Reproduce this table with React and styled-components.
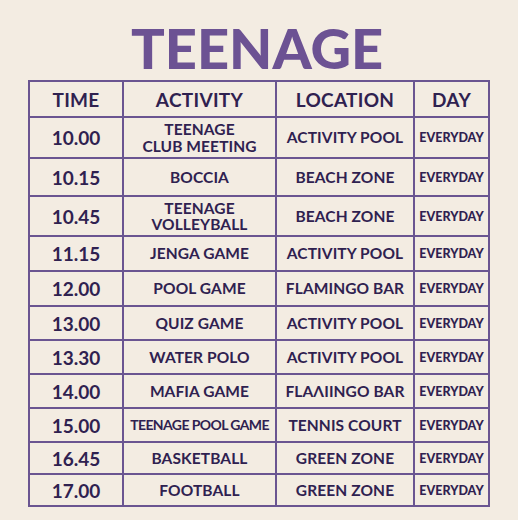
import React from 'react';
import styled, { createGlobalStyle } from 'styled-components';

const GlobalStyle = createGlobalStyle`
    html, body {
        margin: 0;
        padding: 0;
        background: #f3ece2;
    }
    body {
        font-family: 'Lato', 'Liberation Sans', sans-serif;
    }
`;

const schedule = [
    { time: '10.00', activity: ['TEENAGE', 'CLUB MEETING'], location: 'ACTIVITY POOL', h: 41 },
    { time: '10.15', activity: ['BOCCIA'], location: 'BEACH ZONE', h: 38 },
    { time: '10.45', activity: ['TEENAGE', 'VOLLEYBALL'], location: 'BEACH ZONE', h: 40 },
    { time: '11.15', activity: ['JENGA GAME'], location: 'ACTIVITY POOL', h: 35 },
    { time: '12.00', activity: ['POOL GAME'], location: 'FLAMINGO BAR', h: 35 },
    { time: '13.00', activity: ['QUIZ GAME'], location: 'ACTIVITY POOL', h: 34 },
    { time: '13.30', activity: ['WATER POLO'], location: 'ACTIVITY POOL', h: 34 },
    { time: '14.00', activity: ['MAFIA GAME'], location: 'FLAΛIINGO BAR', h: 34 },
    { time: '15.00', activity: ['TEENAGE POOL GAME'], location: 'TENNIS COURT', h: 34, tight: true },
    { time: '16.45', activity: ['BASKETBALL'], location: 'GREEN ZONE', h: 32 },
    { time: '17.00', activity: ['FOOTBALL'], location: 'GREEN ZONE', h: 32 },
];

const App = () => (
    <Page>
        <GlobalStyle />
        <Title>TEENAGE</Title>
        <Table>
            <Row $h={34}>
                <HeadCell>TIME</HeadCell>
                <HeadCell>ACTIVITY</HeadCell>
                <HeadCell>LOCATION</HeadCell>
                <HeadCell>DAY</HeadCell>
            </Row>
            {schedule.map((item) => (
                <Row key={item.time} $h={item.h}>
                    <TimeCell>{item.time}</TimeCell>
                    <TextCell $tight={item.tight}>
                        {item.activity.map((line) => (
                            <Line key={line}>{line}</Line>
                        ))}
                    </TextCell>
                    <TextCell>{item.location}</TextCell>
                    <DayCell>EVERYDAY</DayCell>
                </Row>
            ))}
        </Table>
    </Page>
);

export default App;

const Page = styled.div`
    width: 518px;
    height: 520px;
    padding: 17px 0 0 28px;
    box-sizing: border-box;
    display: flex;
    flex-direction: column;
    align-items: flex-start;
`;

const Title = styled.h1`
    margin: 0 0 0 103px;
    font-family: 'Lato', sans-serif;
    font-weight: 900;
    font-size: 56px;
    line-height: 62px;
    letter-spacing: 0;
    color: #6c5293;
`;

const Table = styled.div`
    margin-top: 1px;
    width: 462px;
    border: 2px solid #6a5591;
    box-sizing: border-box;
    display: flex;
    flex-direction: column;
`;

const Row = styled.div`
    display: grid;
    grid-template-columns: 92px 153px 138px 1fr;
    height: ${(p) => p.$h}px;
    box-sizing: border-box;
    & + & {
        border-top: 2px solid #6a5591;
    }
    & > * + * {
        border-left: 2px solid #6a5591;
    }
`;

const Cell = styled.div`
    display: flex;
    flex-direction: column;
    align-items: center;
    justify-content: center;
    text-align: center;
    color: #2f2150;
    white-space: nowrap;
    overflow: hidden;
`;

const HeadCell = styled(Cell)`
    font-size: 19px;
    font-weight: 700;
    letter-spacing: 0.3px;
`;

const TimeCell = styled(Cell)`
    font-size: 19px;
    font-weight: 700;
`;

const TextCell = styled(Cell)`
    font-size: ${(p) => (p.$tight ? '14px' : '15.5px')};
    font-weight: 700;
    line-height: 16.5px;
    letter-spacing: ${(p) => (p.$tight ? '-0.6px' : '0.1px')};
`;

const Line = styled.span`
    display: block;
`;

const DayCell = styled(Cell)`
    font-size: 12.5px;
    font-weight: 900;
`;
